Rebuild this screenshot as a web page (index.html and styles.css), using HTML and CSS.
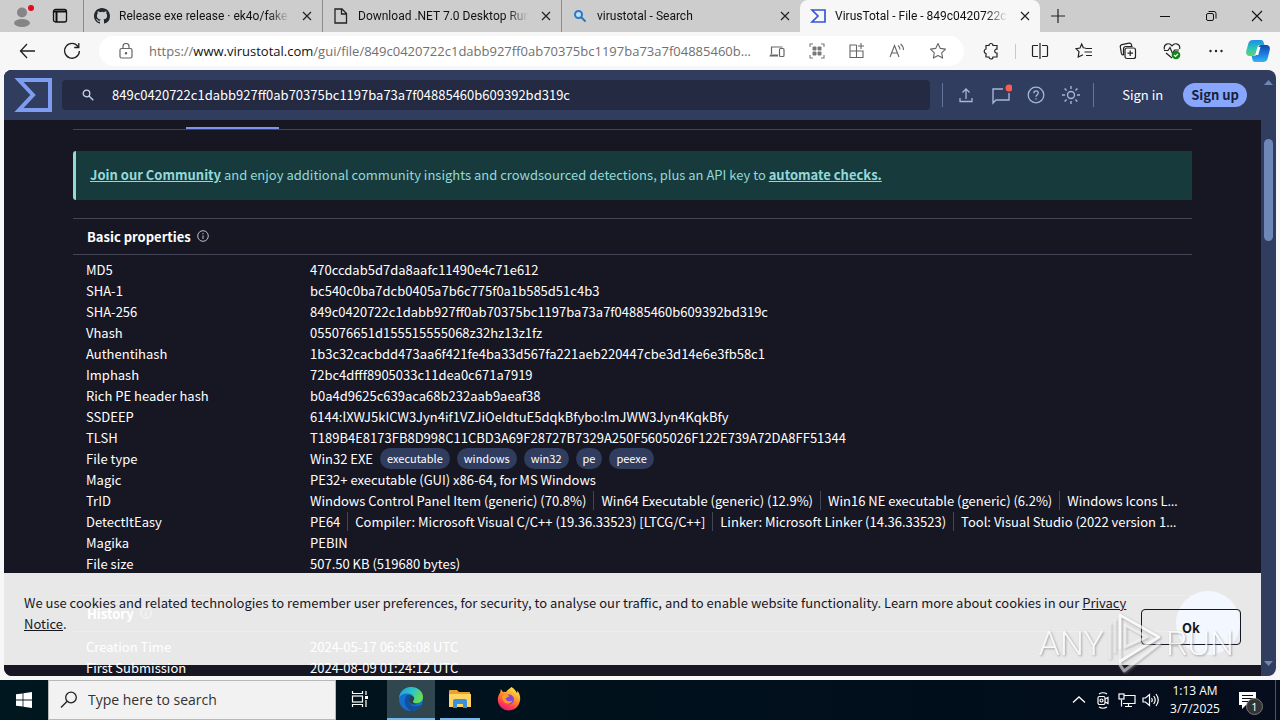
FILE: index.html
```html
<!DOCTYPE html>
<html lang="en">
<head>
<meta charset="utf-8">
<title>VirusTotal - File</title>
<link rel="stylesheet" href="styles.css">
</head>
<body>
<div class="tabstrip">
  <div class="strip-tools">
    <button class="plain avatar" aria-label="Profile"><svg width="22" height="24" viewBox="0 0 22 24"><circle cx="9" cy="8.500" r="5" fill="#858585"/><ellipse cx="9" cy="19" rx="8" ry="4" fill="#858585"/><circle cx="18" cy="4" r="3" fill="#e00b1c"/></svg></button>
    <button class="plain" aria-label="Tab actions"><svg width="16" height="16" viewBox="0 0 16 16" fill="none" stroke="#111" stroke-width="1.300"><rect x="1.500" y="1.500" width="13" height="12.500" rx="2"/><path d="M1.500 3.500h13M4.500 4v10" stroke-width="2"/></svg></button>
  </div>
  <div class="tab">
    <svg class="fav" width="16" height="16" viewBox="0 0 16 16" fill="#24292f"><path d="M8 0C3.580 0 0 3.580 0 8c0 3.540 2.290 6.530 5.470 7.590.4.070.55-.17.55-.38 0-.19-.01-.82-.01-1.490-2.010.37-2.530-.49-2.690-.94-.09-.23-.48-.94-.82-1.130-.28-.15-.68-.52-.01-.53.63-.01 1.080.58 1.230.82.72 1.210 1.870.87 2.330.66.070-.52.280-.87.510-1.070-1.780-.2-3.640-.89-3.640-3.950 0-.87.310-1.590.82-2.150-.08-.2-.36-1.020.080-2.120 0 0 .67-.21 2.200.82a7.600 7.600 0 0 1 4 0c1.530-1.040 2.200-.82 2.200-.82.440 1.100.160 1.920.080 2.120.510.560.820 1.270.820 2.150 0 3.070-1.870 3.750-3.650 3.950.290.250.540.730.540 1.480 0 1.070-.01 1.930-.01 2.200 0 .210.150.460.550.380A8 8 0 0 0 16 8c0-4.420-3.580-8-8-8z"/></svg>
    <span class="tab-title">Release exe release · ek4o/fake-exe</span>
    <button class="plain close" aria-label="Close tab"><svg width="10" height="10" viewBox="0 0 10 10" stroke="#222" stroke-width="1.200"><path d="M1 1l8 8M9 1l-8 8"/></svg></button>
  </div>
  <div class="tab">
    <svg class="fav" width="16" height="16" viewBox="0 0 16 16" fill="none" stroke="#222" stroke-width="1.300"><path d="M2 1h7l4.500 4.500V15H2zM8.500 1v5h5"/></svg>
    <span class="tab-title">Download .NET 7.0 Desktop Runtime</span>
    <button class="plain close" aria-label="Close tab"><svg width="10" height="10" viewBox="0 0 10 10" stroke="#222" stroke-width="1.200"><path d="M1 1l8 8M9 1l-8 8"/></svg></button>
  </div>
  <div class="tab">
    <svg class="fav" width="16" height="16" viewBox="0 0 16 16" fill="none" stroke="#2b78c5" stroke-width="2"><circle cx="6.500" cy="6.500" r="3.500" fill="#c4e0f3"/><path d="M9.500 9.500l3.500 3.500" stroke-linecap="round"/></svg>
    <span class="tab-title">virustotal - Search</span>
    <button class="plain close" aria-label="Close tab"><svg width="10" height="10" viewBox="0 0 10 10" stroke="#222" stroke-width="1.200"><path d="M1 1l8 8M9 1l-8 8"/></svg></button>
  </div>
  <div class="tab active">
    <svg class="fav" width="16" height="16" viewBox="0 0 16 16" fill="none" stroke="#3457d8" stroke-width="1.700"><path d="M2 2h13v12H2l6-6z"/></svg>
    <span class="tab-title">VirusTotal - File - 849c0420722c1dabb</span>
    <button class="plain close" aria-label="Close tab"><svg width="10" height="10" viewBox="0 0 10 10" stroke="#222" stroke-width="1.200"><path d="M1 1l8 8M9 1l-8 8"/></svg></button>
  </div>
  <button class="plain newtab" aria-label="New tab"><svg width="14" height="14" viewBox="0 0 14 14" stroke="#222" stroke-width="1.200"><path d="M7 0v14M0 7h14"/></svg></button>
  <div class="win">
    <button class="plain" aria-label="Minimize"><svg width="12" height="12" viewBox="0 0 12 12" stroke="#111"><path d="M1 6.500h10"/></svg></button>
    <button class="plain" aria-label="Restore"><svg width="12" height="12" viewBox="0 0 12 12" fill="none" stroke="#111"><rect x="1.500" y="3.500" width="7" height="7" rx="1.500"/><path d="M3.500 1.500H9a2 2 0 0 1 2 2V8.500"/></svg></button>
    <button class="plain" aria-label="Close"><svg width="12" height="12" viewBox="0 0 12 12" stroke="#111" stroke-width="1.100"><path d="M1 1l10 10M11 1L1 11"/></svg></button>
  </div>
</div>

<div class="toolbar">
  <button class="plain back" aria-label="Back"><svg width="18" height="16" viewBox="0 0 18 16" fill="none" stroke="#222" stroke-width="1.300"><path d="M16 8H1.500M8 1L1.500 8 8 15"/></svg></button>
  <button class="plain reload" aria-label="Refresh"><svg width="18" height="18" viewBox="0 0 18 18" fill="none" stroke="#222" stroke-width="1.300"><path d="M15 4.500A7.400 7.400 0 1 0 16.400 9M15.800 1v4.500h-4.600"/></svg></button>
  <div class="address">
    <svg width="14" height="16" viewBox="0 0 14 16" fill="none" stroke="#666" stroke-width="1.200"><rect x="1" y="5.500" width="12" height="9.500" rx="1.500"/><path d="M4 5.500V3.500a3 3 0 0 1 6 0v2"/><circle cx="7" cy="10.300" r=".7" fill="#666"/></svg>
    <div class="url">https://<b>www.virustotal.com</b>/gui/file/849c0420722c1dabb927ff0ab70375bc1197ba73a7f04885460b609392bd319c</div>
    <div class="address-tools">
      <svg width="16" height="16" viewBox="0 0 16 16" fill="none" stroke="#666" stroke-width="1.200"><path d="M9 12H1M2.500 11V4h11M9 13H.5"/><rect x="10.500" y="5.500" width="4.500" height="8" rx="1"/></svg>
      <svg width="16" height="16" viewBox="0 0 16 16" fill="none" stroke="#777" stroke-width="1.100"><path d="M1 4V1h3M12 1h3v3M15 12v3h-3M4 15H1v-3"/><g fill="#777" stroke="none"><rect x="3.500" y="3.500" width="4" height="4" rx="1"/><rect x="8.500" y="3.500" width="4" height="4" rx="1"/><rect x="3.500" y="8.500" width="4" height="4" rx="1"/><rect x="8.500" y="8.500" width="4" height="4" rx="1"/></g></svg>
      <svg width="16" height="16" viewBox="0 0 16 16" fill="none" stroke="#666" stroke-width="1.100"><path d="M7.500 2H1v12.500h13V8H1M7.500 2v12.500M12 0v6M9 3h6"/></svg>
      <svg width="16" height="16" viewBox="0 0 16 16" fill="none" stroke="#666" stroke-width="1.100"><path d="M1 14L5.500 2.500 10 14M2.500 10h6M9 2.500q2 1.500 2 4M11.500 1q3 2 3 6"/></svg>
      <svg width="18" height="18" viewBox="0 0 18 18" fill="none" stroke="#666" stroke-width="1.100" stroke-linejoin="round"><path d="M9 1.500l2.300 4.900 5.200.7-3.800 3.700.9 5.300L9 13.600l-4.600 2.500.9-5.300L1.500 7.100l5.200-.7z"/></svg>
    </div>
  </div>
  <button class="plain" aria-label="Extensions"><svg width="18" height="18" viewBox="0 0 18 18" fill="none" stroke="#222" stroke-width="1.200"><path d="M4 3.500h3a2 2 0 0 1 4 0h4v3.700h-1a2 2 0 0 0 0 3.800h1V15h-4a2 2 0 0 1-4 0H4v-3.500a2.300 2.300 0 0 1 0-4.500z"/></svg></button>
  <i class="rule"></i>
  <div class="browser-tools">
    <button class="plain" aria-label="Split screen"><svg width="18" height="16" viewBox="0 0 18 16" fill="none" stroke="#222" stroke-width="1.200"><path d="M7 2.500H2.500q-1 0-1 1v9q0 1 1 1H7M9 0v16M11 2.500h4.500q1 0 1 1v9q0 1-1 1H11"/></svg></button>
    <button class="plain" aria-label="Favorites"><svg width="18" height="18" viewBox="0 0 18 18" fill="none" stroke="#222" stroke-width="1.200"><path d="M10.500 6L8.300 5.800 6.700 2 5 6l-4 .7 3 3-.8 5.300L8 12.700M10.500 6.500H17M9.500 10H17M11 13.500h6"/></svg></button>
    <button class="plain" aria-label="Collections"><svg width="18" height="18" viewBox="0 0 18 18" fill="none" stroke="#222" stroke-width="1.200"><rect x="6" y="6" width="10.500" height="10.500" rx="2"/><path d="M11.200 8.500v5.500M8.500 11.200h5.500M4.500 13.200Q2.500 13 2.300 11L1.300 5Q1 3 3 2.600l7-1.400q2-.3 2.500 1.600l.2 1.200M4.500 13V7q0-2.500 2.500-2.500h6.500"/></svg></button>
    <button class="plain" aria-label="Browser essentials"><svg width="18" height="18" viewBox="0 0 18 18" fill="none" stroke="#222" stroke-width="1.200"><path d="M1.500 7.500C0 2 6 0 9 3.800 12 0 18 2 16.500 7M3 11l6 5M1 8.500h4L7 5.500l2.500 6 2-3.500H16"/><circle cx="13" cy="13" r="4.300" fill="#148516" stroke="none"/><path d="M11 13l1.500 1.500L15 11.800" stroke="#fff"/></svg></button>
    <button class="plain" aria-label="Settings and more"><svg width="18" height="18" viewBox="0 0 18 18" fill="#222"><circle cx="3.500" cy="9" r="1.200"/><circle cx="9" cy="9" r="1.200"/><circle cx="14.500" cy="9" r="1.200"/></svg></button>
  </div>
  <button class="plain copilot" aria-label="Copilot"><svg width="24" height="24" viewBox="0 0 24 24"><defs><linearGradient id="c1" x1="0" y1="0" x2="0" y2="1"><stop offset="0" stop-color="#1d8ee8"/><stop offset=".55" stop-color="#2fc6b6"/><stop offset="1" stop-color="#63d36a"/></linearGradient><linearGradient id="c2" x1="0" y1="0" x2="0" y2="1"><stop offset="0" stop-color="#1448a8"/><stop offset=".5" stop-color="#1c78e0"/><stop offset="1" stop-color="#31b5f4"/></linearGradient></defs><path d="M7 1h8q2 0 2.500 2L18.500 6H14q-2 0-2.500 2L9.500 15q-.7 2-2.500 2H3q-4-1-2.500-6l2-7Q3.500 1 7 1z" fill="url(#c1)"/><path d="M17 23H9q-2 0-2.500-2l-.8-4H8q2 0 2.500-2L12.500 8q.7-2 2.500-2h6q4 1 2.500 6l-2 8q-1 3-4.500 3z" fill="url(#c2)"/><path d="M12 8h2.500l-2.300 8H9.500z" fill="#fff"/></svg></button>
</div>

<div class="page">
  <div class="site">
    <header class="site-head">
      <a href="#" class="logo" aria-label="VirusTotal"><svg width="38" height="34" viewBox="0 0 38 34" fill="none" stroke="#7e9df0" stroke-width="4"><path d="M5 2h31v30H5l14-15z"/></svg></a>
      <div class="search">
        <svg width="12" height="12" viewBox="0 0 12 12" fill="none" stroke="#c8d4ee" stroke-width="1.300"><circle cx="4.500" cy="4.500" r="3.300"/><path d="M7 7l4.300 4.300"/></svg>
        <input type="text" aria-label="Search" value="849c0420722c1dabb927ff0ab70375bc1197ba73a7f04885460b609392bd319c">
      </div>
      <div class="head-tools">
        <button class="plain" aria-label="Upload"><svg width="16" height="16" viewBox="0 0 16 16" fill="none" stroke="#a6b6d8" stroke-width="1.300"><path d="M8 12V2.500M4.500 5.500L8 2l3.500 3.500M2 11v3.500h12V11"/></svg></button>
        <button class="plain" aria-label="Notifications"><svg width="22" height="22" viewBox="0 0 22 22" fill="none" stroke="#a6b6d8" stroke-width="1.400"><path d="M13 5H3v14l3-3h13V9"/><circle cx="19" cy="4" r="3.500" fill="#fb5c50" stroke="none"/></svg></button>
        <button class="plain" aria-label="Help"><svg width="18" height="18" viewBox="0 0 18 18" fill="none" stroke="#a6b6d8" stroke-width="1.300"><circle cx="9" cy="9" r="7.800"/><path d="M6.800 7.200C6.800 4 11.500 4.200 11.300 7 11.200 8.500 9 9 9 10.800M9 12.200v1.400"/></svg></button>
        <button class="plain" aria-label="Theme"><svg width="20" height="20" viewBox="0 0 20 20" fill="none" stroke="#a6b6d8" stroke-width="1.400"><circle cx="10" cy="10" r="3.500"/><path d="M10 1v3M10 16v3M1 10h3M16 10h3M3.600 3.600l2 2M14.400 14.400l2 2M16.400 3.600l-2 2M5.600 14.400l-2 2"/></svg></button>
      </div>
      <a href="#" class="signin">Sign in</a>
      <button class="signup">Sign up</button>
    </header>
    <main class="content">
      <div class="tabs-line"><span></span></div>
      <div class="notice"><a href="#">Join our Community</a> and enjoy additional community insights and crowdsourced detections, plus an API key to <a href="#">automate checks.</a></div>
      <section>
        <h2>Basic properties <svg width="12" height="12" viewBox="0 0 12 12" fill="none" stroke="#b8bccb"><circle cx="6" cy="6" r="5.300"/><path d="M6 5.300V9M6 3v1.200"/></svg></h2>
        <table class="props">
          <tr><th>MD5</th><td>470ccdab5d7da8aafc11490e4c71e612</td></tr>
          <tr><th>SHA-1</th><td>bc540c0ba7dcb0405a7b6c775f0a1b585d51c4b3</td></tr>
          <tr><th>SHA-256</th><td>849c0420722c1dabb927ff0ab70375bc1197ba73a7f04885460b609392bd319c</td></tr>
          <tr><th>Vhash</th><td>055076651d155515555068z32hz13z1fz</td></tr>
          <tr><th>Authentihash</th><td>1b3c32cacbdd473aa6f421fe4ba33d567fa221aeb220447cbe3d14e6e3fb58c1</td></tr>
          <tr><th>Imphash</th><td>72bc4dfff8905033c11dea0c671a7919</td></tr>
          <tr><th>Rich PE header hash</th><td>b0a4d9625c639aca68b232aab9aeaf38</td></tr>
          <tr><th>SSDEEP</th><td>6144:lXWJ5kICW3Jyn4if1VZJiOeIdtuE5dqkBfybo:lmJWW3Jyn4KqkBfy</td></tr>
          <tr><th>TLSH</th><td>T189B4E8173FB8D998C11CBD3A69F28727B7329A250F5605026F122E739A72DA8FF51344</td></tr>
          <tr><th>File type</th><td><div class="tags">Win32 EXE<span class="tag">executable</span><span class="tag">windows</span><span class="tag">win32</span><span class="tag">pe</span><span class="tag">peexe</span></div></td></tr>
          <tr><th>Magic</th><td>PE32+ executable (GUI) x86-64, for MS Windows</td></tr>
          <tr><th>TrID</th><td><div class="parts"><span>Windows Control Panel Item (generic) (70.8%)</span><span>Win64 Executable (generic) (12.9%)</span><span>Win16 NE executable (generic) (6.2%)</span><span>Windows Icons Library (generic) (2.6%)</span></div></td></tr>
          <tr><th>DetectItEasy</th><td><div class="parts"><span>PE64</span><span>Compiler: Microsoft Visual C/C++ (19.36.33523) [LTCG/C++]</span><span>Linker: Microsoft Linker (14.36.33523)</span><span>Tool: Visual Studio (2022 version 17.6)</span></div></td></tr>
          <tr><th>Magika</th><td>PEBIN</td></tr>
          <tr><th>File size</th><td>507.50 KB (519680 bytes)</td></tr>
        </table>
      </section>
      <section class="history">
        <h2>History <svg width="12" height="12" viewBox="0 0 12 12" fill="none" stroke="#b8bccb"><circle cx="6" cy="6" r="5.300"/><path d="M6 5.300V9M6 3v1.200"/></svg></h2>
        <table class="props">
          <tr><th>Creation Time</th><td>2024-05-17 06:58:08 UTC</td></tr>
          <tr><th>First Submission</th><td>2024-08-09 01:24:12 UTC</td></tr>
        </table>
      </section>
    </main>
    <div class="cookies">
      <p>We use cookies and related technologies to remember user preferences, for security, to analyse our traffic, and to enable website functionality. Learn more about cookies in our <a href="#">Privacy Notice</a>.</p>
      <i class="chat"></i>
      <button>Ok</button>
    </div>
  </div>
  <div class="scroll">
    <svg width="9" height="5" viewBox="0 0 9 5" fill="#7087b2"><path d="M0 5l4.500-5L9 5z"/></svg>
    <i class="thumb"></i>
    <svg class="down" width="9" height="5" viewBox="0 0 9 5" fill="#7087b2"><path d="M0 0l4.500 5L9 0z"/></svg>
  </div>
</div>

<div class="watermark"><span>ANY</span><svg width="56" height="64" viewBox="0 0 56 64" fill="none" stroke="#fff" stroke-width="3" stroke-linejoin="round"><path d="M3 12v36M8 8v34" opacity=".6"/><path d="M13 38V4l39 22-40 25" /><path d="M13 38v16l4 6 36-28M17 60l-4-6M18 14v22l22-10z" opacity=".75"/></svg><span>RUN</span></div>

<footer class="taskbar">
  <button class="plain start" aria-label="Start"><svg width="16" height="16" viewBox="0 0 16 16" fill="#fff"><path d="M0 2.300L6.600 1.400v6.200H0zM7.400 1.300L16 0v7.600H7.400zM0 8.400h6.600v6.200L0 13.700zM7.400 8.400H16V16l-8.600-1.300z"/></svg></button>
  <div class="task-search">
    <svg width="18" height="18" viewBox="0 0 18 18" fill="none" stroke="#222" stroke-width="1.300"><circle cx="11" cy="6.500" r="5.300"/><path d="M7.200 10.300L1 16.500"/></svg>
    <input type="text" aria-label="Search" placeholder="Type here to search">
  </div>
  <button class="plain app" aria-label="Task view"><svg width="18" height="18" viewBox="0 0 18 18" fill="none" stroke="#fff" stroke-width="1.200"><path d="M1.500 1v2.500h10V1M1.500 17v-2.500h10V17M15 1v4M15 10v7"/><rect x="1.500" y="6" width="10" height="6"/><path d="M14 7.500h3" stroke-width="3"/></svg></button>
  <button class="plain app current" aria-label="Microsoft Edge"><svg width="24" height="24" viewBox="0 0 24 24"><defs><linearGradient id="e1" x1="0" y1="0" x2="1" y2=".4"><stop offset="0" stop-color="#1aa0dc"/><stop offset=".6" stop-color="#30c6c4"/><stop offset="1" stop-color="#67dd50"/></linearGradient></defs><circle cx="12" cy="12" r="12" fill="#1670cb"/><path d="M0 11C1 4 6 0 12 0c7 0 12 4.600 12 10 0 4-3 6.200-6.500 6.200-3 0-4.200-1.200-3.500-2.200 3-4-1-7.500-5.500-7.500C4 6.500 1 8.500 0 11z" fill="url(#e1)"/><path d="M8.500 8C4 11 4.500 20 12 24c4 0 8-2.500 10-6-7 3-12 .5-12-5 0-2 1-3.500 2.500-4.200Q10.500 7 8.500 8z" fill="#124f9e"/><path d="M12.500 8.800c3 1 3.500 3.200 1.500 5.200-1 2 2 3.200 5 2.500-4 2.500-9 0-9-3.500 0-2 1-3.600 2.500-4.200z" fill="#28424c"/></svg></button>
  <button class="plain app open" aria-label="File Explorer"><svg width="22" height="20" viewBox="0 0 22 20"><path d="M0 1.500Q0 1 1 1h7l2 2h11v15H0z" fill="#e8a02e"/><path d="M0 5h22v13H0z" fill="#ffd461"/><path d="M4 19v-7q0-2 2-2h10q2 0 2 2v7h-4v-4H8v4z" fill="#3a93d8"/></svg></button>
  <button class="plain app" aria-label="Firefox"><svg width="24" height="24" viewBox="0 0 24 24"><defs><linearGradient id="f1" x1=".8" y1="0" x2=".3" y2="1"><stop offset="0" stop-color="#fff04a"/><stop offset=".45" stop-color="#ff9328"/><stop offset=".8" stop-color="#ff3750"/><stop offset="1" stop-color="#e3177f"/></linearGradient></defs><path d="M14.500 0c4 2.500 4.500 5 5.500 6 .500-.500.300-1.500 0-2.500 3 3 3.500 6.500 3 10C22 20 17 23.500 12 23.500 5.500 23.500.8 18.500.8 12.500c0-3 1-5 2.500-7l.5-3.500 2.200 3q1.500-.5 3 0c1.500-2 3.500-3 5.500-5z" fill="url(#f1)"/><circle cx="12" cy="12.500" r="5" fill="#8148e0"/><path d="M5 9q4-3 7.500 0c-1 1.500-3 1-4 2.500 1 3 4 3.500 7 2-2 5-10 4.500-10.500-4.500z" fill="#ff9a26"/></svg></button>
  <div class="tray">
    <svg width="14" height="18" viewBox="0 0 14 18" fill="none" stroke="#fff" stroke-width="1.300"><path d="M1 11.500L7 6l6 5.500"/></svg>
    <svg width="14" height="18" viewBox="0 0 14 18" fill="none" stroke="#fff" stroke-width="1.200"><rect x="2" y="5.500" width="7" height="8" rx="1.500"/><circle cx="5.500" cy="9.500" r="1.500"/><path d="M9 8l3-1.500v6L9 11M3 3q4-2.500 8 0M3 16q4 2.500 8 0"/></svg>
    <svg width="18" height="18" viewBox="0 0 18 18" fill="none" stroke="#fff" stroke-width="1.200"><path d="M6 4.500h11v8H5M10.500 12.500v3M7 15.500h7M3.500 8.500v7"/><rect x="1" y="3" width="5" height="5"/></svg>
    <svg width="18" height="18" viewBox="0 0 18 18" fill="none" stroke="#fff" stroke-width="1.200"><path d="M1 7h2.500l4-3.500v11l-4-3.500H1zM9.500 7q1.500 2 0 4M11.700 5q3 4 0 8M14 3q4.500 6 0 12"/></svg>
  </div>
  <div class="clock"><span>1:13 AM</span><span>3/7/2025</span></div>
  <button class="plain note" aria-label="Notifications"><svg width="18" height="18" viewBox="0 0 18 18"><path d="M0 1h17v13H7l-4 4v-4H0z" fill="#fff"/><path d="M3 4.500h11M3 7.500h11M3 10.500h7" stroke="#050d19"/></svg><b>1</b></button>
</footer>
</body>
</html>
```
FILE: styles.css
```css
* { box-sizing: border-box; }
body {
  margin: 0;
  height: 100vh;
  display: flex;
  flex-direction: column;
  overflow: hidden;
  position: relative;
  background: #f7f7f7;
  color: #111;
  font: 12px/16px "Open Sans", "Noto Sans", sans-serif;
}
svg { display: block; flex: none; }
input { min-width: 0; border: 0; background: none; outline: 0; padding: 0; font: inherit; color: inherit; }
.plain { border: 0; background: none; padding: 0; color: inherit; display: flex; align-items: center; justify-content: center; flex: none; }

/* Tab strip */
.tabstrip { display: flex; height: 32px; background: #cdcdcd; flex: none; }
.strip-tools { display: flex; align-items: center; gap: 17px; width: 83px; padding-left: 13px; flex: none; }
.avatar { width: 22px; }
.tab { display: flex; align-items: center; flex: 0 1 239px; min-width: 0; border-left: 1px solid #8c8c8c; padding: 0 10px; gap: 9px; }
.tab-title { flex: 1; min-width: 0; overflow: hidden; white-space: nowrap; font-family: Roboto, sans-serif; mask-image: linear-gradient(to right, #000 86%, transparent 98%); }
.tab.active { background: #f7f7f7; border: 0; border-radius: 8px 8px 0 0; flex-basis: 240px; }
.newtab { width: 36px; }
.win { margin-left: auto; display: flex; }
.win button { width: 46px; }

/* Toolbar */
.toolbar { display: flex; align-items: center; height: 38px; flex: none; padding: 0 10px 0 19px; }
.back { width: 18px; margin-right: 26px; }
.reload { margin-right: 18px; }
.address { flex: 1; min-width: 0; display: flex; align-items: center; height: 30px; padding: 0 17px 0 20px; border-radius: 15px; background: #fff; }
.url { flex: 1; min-width: 0; margin: 0 16px; overflow: hidden; text-overflow: ellipsis; white-space: nowrap; color: #707070; font-size: 13px; line-height: 20px; }
.url b { font-weight: 400; color: #111; }
.address-tools { display: flex; align-items: center; gap: 24px; }
.address + .plain { margin-left: 18px; }
.rule { width: 1px; height: 15px; background: #c9c9c9; margin: 0 15px; }
.browser-tools { display: flex; gap: 26px; margin-right: 21px; }

/* Web page */
.page { flex: 1; min-height: 0; display: flex; margin: 0 4px 4px; border-radius: 8px; overflow: hidden; background: #303d5f; }
.site { flex: 1; min-width: 0; display: flex; flex-direction: column; position: relative; background: #171724; color: #fff; font: 13px/21px "Noto Sans CJK SC", sans-serif; }
.site-head { display: flex; align-items: center; height: 50px; flex: none; padding: 0 14px 0 10px; background: #303d5f; }
.logo { margin-right: 10px; }
.search { flex: 1; min-width: 0; display: flex; align-items: center; gap: 18px; height: 30px; padding: 0 20px; border-radius: 4px; background: #232a42; }
.search input { flex: 1; padding-bottom: 2px; }
.head-tools { display: flex; align-items: center; height: 24px; margin-left: 12px; padding: 0 5px; border: solid #62749a; border-width: 0 1px; }
.head-tools button { width: 35px; height: 30px; }
.signin { color: #fff; text-decoration: none; margin: 0 20px 1px 28px; }
.signup { height: 24px; padding: 0 8px 1px; border: 0; border-radius: 12px; background: #88a6fc; color: #171f3c; font: bold 13px/23px "Noto Sans CJK SC", sans-serif; }
.content { flex: 1; min-height: 0; overflow: hidden; padding: 7px 69px 0; }
.tabs-line { height: 3px; margin-bottom: 21px; border-bottom: 1px solid #434557; }
.tabs-line span { display: block; width: 93px; height: 2px; margin-left: 113px; background: #7d95ee; }
.notice { padding: 13px 14px 15px; border-left: 3px solid #92d9d8; border-radius: 3px 0 0 3px; background: #173a3d; color: #92d9d8; margin-bottom: 18px; }
.notice a { color: inherit; font-weight: 700; }
h2 { display: flex; align-items: center; gap: 6px; height: 37px; margin: 0; padding: 0 14px 1px; border: solid #434557; border-width: 1px 0; font-size: 13px; line-height: 21px; }
.props { width: 100%; table-layout: fixed; border-collapse: collapse; margin-top: 4px; }
.props th { width: 237px; padding: 0 0 0 13px; text-align: left; font-weight: 400; }
.props td { padding: 0 12px 0 0; white-space: nowrap; }
.tags { display: flex; align-items: center; gap: 7px; height: 21px; }
.tag { padding: 0 7px; border-radius: 11px; background: #303d5f; font-size: 11px; }
.parts { height: 21px; overflow: hidden; text-overflow: ellipsis; font-family: "Open Sans", sans-serif; }
.parts span { font-family: "Noto Sans CJK SC", sans-serif; }
.parts span + span { margin-left: 7px; padding-left: 7px; border-left: 1px solid #434557; }
.history { margin-top: 21px; }

/* Cookie bar */
.cookies { position: absolute; left: 0; right: 0; bottom: 11px; display: flex; align-items: center; gap: 6px; padding: 20px; height: 92px; background: rgba(255, 255, 255, .9); color: #171724; }
.cookies p { flex: 1; margin: 0 0 12px; }
.cookies a { color: inherit; }
.cookies button { position: relative; width: 100px; height: 36px; margin-top: 16px; border: 1px solid #171724; border-radius: 4px; background: none; color: #171724; font: bold 13px/21px "Noto Sans CJK SC", sans-serif; }
.chat { position: absolute; right: 21px; top: 18px; width: 64px; height: 64px; border-radius: 50%; background: #f3f7ff; }
.scroll { width: 15px; display: flex; flex-direction: column; align-items: center; padding: 10px 0; }
.thumb { width: 9px; height: 102px; margin-top: 54px; border-radius: 5px; background: #6e87b7; }
.down { margin-top: auto; }

.watermark { position: absolute; right: 46px; bottom: 45px; display: flex; align-items: center; gap: 3px; color: #fff; opacity: .7; font: 300 34px/64px Roboto, sans-serif; filter: drop-shadow(1px 1px 1px #888); pointer-events: none; }

/* Taskbar */
.taskbar { display: flex; height: 40px; flex: none; padding-right: 4px; background: linear-gradient(to right, #00171f, #000e1b 75%, #060d1d); color: #fff; }
.start { width: 48px; }
.task-search { width: 288px; display: flex; align-items: center; gap: 10px; padding: 0 11px; background: #f2f2f2; border: 1px solid #b8b8b8; color: #222; font-size: 14px; line-height: 20px; }
.task-search input { flex: 1; }
.task-search input::placeholder { color: #333; opacity: 1; }
.app { width: 48px; border-bottom: 2px solid transparent; }
.current { margin-left: 3px; background: #30474f; border-color: #76b9ed; }
.open { width: 40px; margin: 0 5px; border-color: #76b9ed; }
.tray { margin-left: auto; display: grid; grid-template-columns: repeat(4, 24px); align-items: center; justify-items: center; }
.clock { display: flex; flex-direction: column; width: 64px; padding-top: 2px; line-height: 18px; text-align: center; }
.note { position: relative; width: 49px; padding-left: 12px; justify-content: flex-start; border-right: 1px solid #555; }
.note b { position: absolute; left: 19px; top: 18px; width: 17px; height: 17px; border: 1px solid #777; border-radius: 50%; background: #333; font: 11px/15px "Open Sans", sans-serif; }
```
